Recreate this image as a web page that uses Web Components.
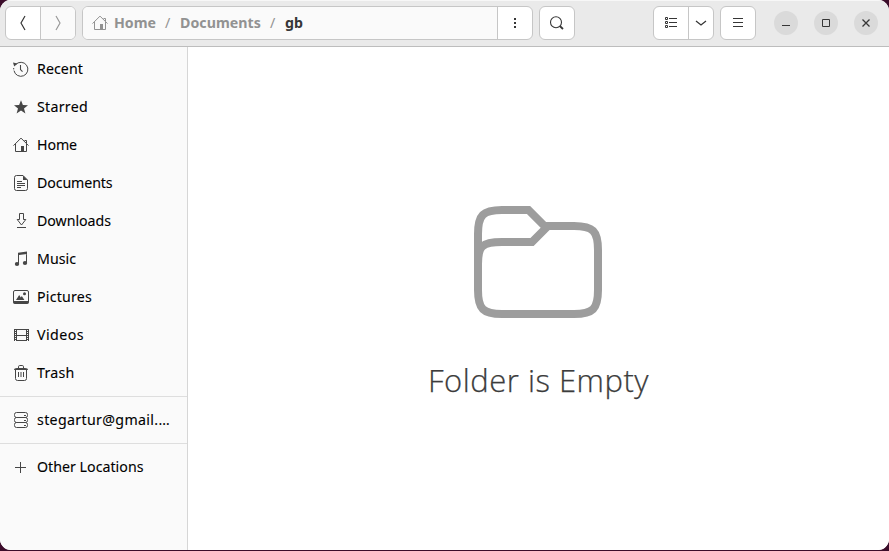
<!DOCTYPE html>
<html lang="en">
<head>
<meta charset="utf-8">
<title>Files</title>
<style>
html,body{margin:0;height:100%;overflow:hidden}
body{background:#3b0c2a;font-family:"Noto Sans","Open Sans",sans-serif}
</style>
</head>
<body>
<files-window></files-window>
<script>
const ICONS = {
  recent: '<path d="M2.6 3.7A7 7 0 1 1 1 9.6M.7 8.4V7" fill="none" stroke="currentColor"/><path d="M0 1.6 4.4 2.5 1.2 5.6Z"/><path d="M7.5 4v4.5l2 2.2" fill="none" stroke="currentColor" stroke-width="1.1"/>',
  star: '<path d="M8 1.2 9.9 6.1 15 6.3 11 9.5 12.4 14.5 8 11.6 3.6 14.5 5 9.5 1 6.3 6.1 6.1Z"/>',
  home: '<path d="M.5 8.6 8 1.1l7.5 7.5M2.5 7v7.5h11V7M11.5 3.5h2v2.6" fill="none" stroke="currentColor"/><path d="M8 9h3v6H8z"/>',
  doc: '<path d="M10 .5H3.5q-2 0-2 2v11q0 2 2 2h9q2 0 2-2V5Z" fill="none" stroke="currentColor"/><path d="M10 .5 14.5 5H10ZM4 6h5v1H4zM4 8h8v1H4zM4 10h8v1H4zM4 12h4v1H4z"/>',
  down: '<path d="M6.5 .5h4v6h2.3L8.5 12 4.2 6.5h2.3Z" fill="none" stroke="currentColor"/><path d="M4 14h9v1H4z"/>',
  music: '<path d="M5 1.7 14 .5V3L6 4v8.5H5zM13 2h1v9.5h-1z"/><ellipse cx="4" cy="13" rx="2.2" ry="1.9"/><ellipse cx="12" cy="12" rx="2.2" ry="1.9"/>',
  pic: '<rect x=".5" y="1.5" width="15" height="12" rx="1.5" fill="none" stroke="currentColor"/><path d="M0 12h16v1.3q0 1.7-1.7 1.7H1.7Q0 15 0 13.3ZM3 11 6.2 6l1.6 2.5 1-1.5 2.6 4Z"/><circle cx="11.5" cy="4.7" r="1.5"/>',
  video: '<path d="M3.5 2v12M13.5 2v12M3.5 2.5h10M3.5 8.5h10M3.5 13.5h10" fill="none" stroke="currentColor"/><path d="M1.5 2v12M15.5 2v12" fill="none" stroke="currentColor"/><path d="M2.5 2v12M14.5 2v12" fill="none" stroke="currentColor" stroke-dasharray="1 1"/>',
  trash: '<path d="M5.5 3V1.8q0-1.3 1.2-1.3h2.6q1.2 0 1.2 1.3V3M2.5 5v8.5q0 2 2 2h7q2 0 2-2V5M5.5 7v5M8 7v5M10.5 7v5" fill="none" stroke="currentColor"/><path d="M1 5q0-2 3-2h8q3 0 3 2Z"/>',
  server: '<g fill="none" stroke="currentColor"><rect x="1.5" y=".5" width="13" height="5" rx="2"/><rect x="1.5" y="5.5" width="13" height="5" rx="2"/><rect x="1.5" y="10.5" width="13" height="5" rx="2"/></g><path d="M11 3h2v1h-2zM11 8h2v1h-2zM11 13h2v1h-2z"/>',
  plus: '<path d="M2 8h11v1H2zM7 3h1v11H7z"/>',
  back: '<path d="M10 1 6 8l4 7" fill="none" stroke="currentColor" stroke-width="1.2"/>',
  forward: '<path d="M6 1l4 7-4 7" fill="none" stroke="currentColor" stroke-width="1.2"/>',
  dots: '<path d="M7 3h2v2H7zM7 7h2v2H7zM7 11h2v2H7z"/>',
  search: '<circle cx="7" cy="7.2" r="5.5" fill="none" stroke="currentColor" stroke-width="1.1"/><path d="m10.8 11 3.2 3" fill="none" stroke="currentColor" stroke-width="1.8"/>',
  list: '<path d="M2.5 2.5h2v2h-2zM2.5 6.5h2v2h-2zM2.5 10.5h2v2h-2z" fill="none" stroke="currentColor"/><path d="M6 3h8v1H6zM6 7h8v1H6zM6 11h8v1H6z"/>',
  chevron: '<path d="m3 6 5 4 5-4" fill="none" stroke="currentColor" stroke-width="1.3"/>',
  menu: '<path d="M3 3h10v1H3zM3 7h10v1H3zM3 11h10v1H3z"/>',
  min: '<path d="M4 10h8v1H4z"/>',
  max: '<path d="M4.5 4.5h7v7h-7z" fill="none" stroke="currentColor"/>',
  close: '<path d="m4.5 4.5 7 7M11.5 4.5l-7 7" fill="none" stroke="currentColor" stroke-width="1.3"/>'
};

class FilesIcon extends HTMLElement {
  connectedCallback() {
    this.attachShadow({mode: 'open'}).innerHTML =
      `<style>:host{display:block;width:16px;height:16px;flex:none}svg{display:block}</style>
       <svg width="16" height="16" viewBox="0 0 16 16" fill="currentColor">${ICONS[this.getAttribute('name')]}</svg>`;
  }
}
customElements.define('files-icon', FilesIcon);

/* A one-line label whose tracking is spread over the given width. */
class FilesLabel extends HTMLElement {
  connectedCallback() {
    const text = this.getAttribute('text'), w = +this.getAttribute('width');
    this.attachShadow({mode: 'open'}).innerHTML =
      `<style>:host{display:block;white-space:pre;flex:none;width:${w}px}span{display:inline-block}</style><span></span>`;
    const span = this.shadowRoot.querySelector('span');
    span.textContent = text;
    span.style.letterSpacing = (w - span.getBoundingClientRect().width) / text.length + 'px';
  }
}
customElements.define('files-label', FilesLabel);

class PlaceRow extends HTMLElement {
  connectedCallback() {
    this.attachShadow({mode: 'open'}).innerHTML =
      `<style>:host{display:flex;align-items:center;height:38px;padding-left:13px;gap:8px;color:#000;font-size:14.2px;line-height:20px}
       files-icon{color:#464646}files-label{-webkit-text-stroke:.1px #000}</style>
       <files-icon name="${this.getAttribute('icon')}"></files-icon>
       <files-label text="${this.getAttribute('text')}" width="${this.getAttribute('width')}"></files-label>`;
  }
}
customElements.define('place-row', PlaceRow);

class PlacesSidebar extends HTMLElement {
  connectedCallback() {
    this.attachShadow({mode: 'open'}).innerHTML =
      `<style>:host{display:block;box-sizing:border-box;width:188px;flex:none;padding-top:3px;background:#fafafa;border-right:1px solid #d6d6d6}
       hr{border:0;height:1px;margin:4px 0;background:#dedede}</style>
       <place-row icon="recent" text="Recent" width="46"></place-row>
       <place-row icon="star" text="Starred" width="51"></place-row>
       <place-row icon="home" text="Home" width="40"></place-row>
       <place-row icon="doc" text="Documents" width="75.5"></place-row>
       <place-row icon="down" text="Downloads" width="74"></place-row>
       <place-row icon="music" text="Music" width="39"></place-row>
       <place-row icon="pic" text="Pictures" width="55"></place-row>
       <place-row icon="video" text="Videos" width="47"></place-row>
       <place-row icon="trash" text="Trash" width="37.5"></place-row>
       <hr><place-row icon="server" text="stegartur@gmail.…" width="133"></place-row>
       <hr><place-row icon="plus" text="Other Locations" width="106.5"></place-row>`;
  }
}
customElements.define('places-sidebar', PlacesSidebar);

/* A frame that joins its slotted cells; cells are split by a hairline. */
class ButtonGroup extends HTMLElement {
  connectedCallback() {
    this.attachShadow({mode: 'open'}).innerHTML =
      `<style>:host{display:flex;box-sizing:border-box;height:34px;border:1px solid #c6c6c6;border-radius:6px;overflow:hidden;background:#fff;flex:none}
       ::slotted(*){display:flex;align-items:center;justify-content:center;box-sizing:border-box}
       ::slotted(:not(:first-child)){border-left:1px solid #c6c6c6}</style><slot></slot>`;
  }
}
customElements.define('button-group', ButtonGroup);

class HeaderBar extends HTMLElement {
  connectedCallback() {
    this.attachShadow({mode: 'open'}).innerHTML =
      `<style>
       :host{display:flex;box-sizing:border-box;height:47px;flex:none;padding:5px 11px 0 5px;gap:6px;background:#eaeaea;border-top:1px solid #f7f7f7;border-bottom:1px solid #bdbdbd;color:#363636}
       .w35{width:35px}.w34{width:34px}.fade{background:#fafafa;color:#999}
       .path{width:414px;background:#fafafa;color:#929292;font-size:14.2px;line-height:20px;font-weight:700}
       .path{justify-content:flex-start!important;padding-left:9px}
       .path files-icon{margin-right:6px}
       .slash{width:6px;font-weight:400}.space{flex:1}
       .controls{display:flex;gap:16px;margin-left:12px;height:34px;align-items:center}
       .controls span{width:24px;height:24px;border-radius:50%;background:#dadada;display:flex;align-items:center;justify-content:center}
       .cur{color:#363636}
       </style>
       <button-group><span class="w34"><files-icon name="back"></files-icon></span><span class="w35 fade"><files-icon name="forward"></files-icon></span></button-group>
       <button-group><span class="path"><files-icon name="home"></files-icon>
         <files-label text="Home" width="42"></files-label>
         <files-label class="slash" text="/" width="6" style="margin:0 9px"></files-label>
         <files-label text="Documents" width="81"></files-label>
         <files-label class="slash" text="/" width="6" style="margin:0 9px"></files-label>
         <files-label class="cur" text="gb" width="18"></files-label></span>
         <span class="w35"><files-icon name="dots"></files-icon></span></button-group>
       <button-group><span class="w34"><files-icon name="search"></files-icon></span></button-group>
       <div class="space"></div>
       <button-group><span class="w34"><files-icon name="list"></files-icon></span><span style="width:25px"><files-icon name="chevron"></files-icon></span></button-group>
       <button-group><span class="w34"><files-icon name="menu"></files-icon></span></button-group>
       <div class="controls"><span><files-icon name="min"></files-icon></span><span><files-icon name="max"></files-icon></span><span><files-icon name="close"></files-icon></span></div>`;
  }
}
customElements.define('header-bar', HeaderBar);

class EmptyFolder extends HTMLElement {
  connectedCallback() {
    this.attachShadow({mode: 'open'}).innerHTML =
      `<style>:host{display:flex;flex:1;flex-direction:column;align-items:center;padding-top:159px;background:#fff;color:#3c3c3c}
       svg{display:block;margin-right:1px}files-label{margin-top:40px;font-size:31px;line-height:44px;font-weight:300;font-family:"Open Sans","Noto Sans",sans-serif;-webkit-text-stroke:.25px #3c3c3c}</style>
       <svg width="128" height="112" viewBox="0 0 128 112" fill="none" stroke="#9d9d9d" stroke-width="8">
       <path d="M4 84V28C4 9 9 4 28 4H54.5L70.5 20H100C119 20 124 25 124 44V84C124 103 119 108 100 108H28C9 108 4 103 4 84V58C4 40 8 36 28 36H58L73 21"/></svg>
       <files-label text="Folder is Empty" width="221"></files-label>`;
  }
}
customElements.define('empty-folder', EmptyFolder);

class FilesWindow extends HTMLElement {
  connectedCallback() {
    this.attachShadow({mode: 'open'}).innerHTML =
      `<style>:host{display:flex;flex-direction:column;width:889px;height:550px;border-radius:11px;overflow:hidden;background:#fff}
       main{display:flex;flex:1}</style>
       <header-bar></header-bar><main><places-sidebar></places-sidebar><empty-folder></empty-folder></main>`;
  }
}
customElements.define('files-window', FilesWindow);
</script>
</body>
</html>
